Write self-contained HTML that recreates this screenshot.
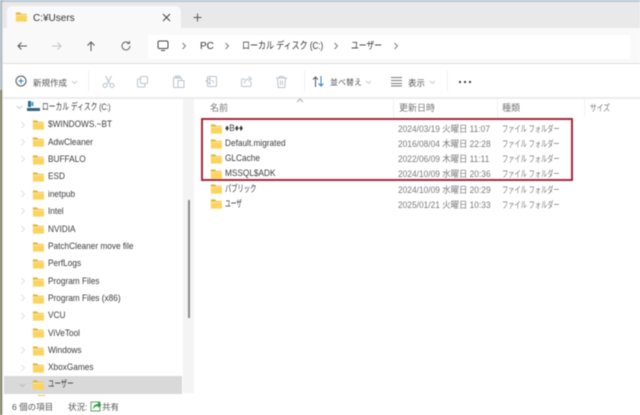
<!DOCTYPE html>
<html lang="ja"><head><meta charset="utf-8"><title>C:¥Users</title>
<style>
html,body{margin:0;padding:0;background:#fff}
#w{position:relative;width:640px;height:415px;overflow:hidden;background:#fff;font-family:"Liberation Sans","Noto Sans CJK JP",sans-serif;color:#333;filter:blur(.4px)}
#w div,#w svg{position:absolute}
.t{white-space:nowrap;line-height:14px;height:14px;transform-origin:left center}
.tr{font-size:9.5px;left:48px;color:#3c3c3c;transform:scaleX(.87)}
.r{font-size:9.5px;left:225px;color:#3c3c3c;transform:scaleX(.87)}
.d{font-size:9px;left:398px;color:#7a7a7a;transform:scaleX(.93)}
.k{font-size:9px;left:502px;color:#7a7a7a;transform:scaleX(.69)}
.h{font-size:9px;color:#777;top:101px}
.f{width:12.500px;height:10px}
.c{width:6px;height:8px}
.a{width:6px;height:8px}
.i{fill:none;stroke:#b9c3cb;stroke-width:1}
</style></head><body>
<div id="w">
<svg width="0" height="0" style="left:0;top:0"><defs>
<symbol id="fo" viewBox="0 0 16 13"><path d="M1 .5h5.500l1.500 2H15v2H1z" fill="#e3b63c"/><path d="M1 3.500h14.500V12.500H1z" fill="#fbd45f"/><path d="M1 3.500h14.500v1.200H1z" fill="#fdeaa8"/></symbol>
<symbol id="ch" viewBox="0 0 6 8"><path d="M1.500 1l3 3-3 3" fill="none" stroke="#e2e2e2"/></symbol>
<symbol id="ca" viewBox="0 0 6 8"><path d="M1.500 1l3 3-3 3" fill="none" stroke="#7d7d7d"/></symbol>
</defs></svg>

<!-- chrome -->
<div style="left:0;top:0;width:640px;height:28px;background:#e9e9e9"></div>
<div style="left:0;top:0;width:640px;height:2px;background:#b7c6d3"></div>
<div style="left:7px;top:6px;width:174px;height:22px;background:#f9f9f9;border-radius:5px 5px 0 0"></div>
<svg class="f" style="left:14.500px;top:12px"><use href="#fo"/></svg>
<div class="t" style="left:33px;top:11.500px;font-size:10px;color:#333">C:¥Users</div>
<svg style="left:161px;top:12px" width="11" height="11"><path d="M2 2l7 7M9 2l-7 7" stroke="#444" fill="none"/></svg>
<svg style="left:192px;top:12px" width="11" height="11"><path d="M5.500 1.500v8M1.500 5.500h8" stroke="#555" fill="none"/></svg>

<div style="left:0;top:28px;width:640px;height:35px;background:#f9f9f9"></div>
<div style="left:148px;top:35px;width:482px;height:24px;background:#fff"></div>
<svg style="left:16px;top:40px" width="12" height="12"><path d="M11 6H2M5.500 2.500L2 6l3.500 3.500" stroke="#555" fill="none"/></svg>
<svg style="left:51px;top:40px" width="12" height="12"><path d="M1 6h9M6.500 2.500L10 6l-3.500 3.500" stroke="#c4c4c4" fill="none"/></svg>
<svg style="left:85px;top:40px" width="12" height="12"><path d="M6 11V2M2.500 5.500L6 2l3.500 3.500" stroke="#555" fill="none"/></svg>
<svg style="left:120px;top:40px" width="12" height="12"><path d="M10 6a4 4 0 1 1-1.300-3M9.500 1v2.500H7" stroke="#666" fill="none"/></svg>
<svg style="left:157px;top:40px" width="12" height="12"><rect x="1" y="1" width="10" height="7.500" rx="1.500" fill="none" stroke="#444"/><path d="M4 10.500h4" stroke="#444"/></svg>
<svg class="a" style="left:181px;top:42px"><use href="#ca"/></svg>
<svg class="a" style="left:224px;top:42px"><use href="#ca"/></svg>
<svg class="a" style="left:333px;top:42px"><use href="#ca"/></svg>
<svg class="a" style="left:393px;top:42px"><use href="#ca"/></svg>
<div class="t" style="left:200px;top:40px;font-size:10px">PC</div>
<div class="t" style="left:242px;top:40px;font-size:10px;transform:scaleX(.8)">ローカル ディスク (C:)</div>
<div class="t" style="left:351px;top:40px;font-size:10px;transform:scaleX(.78)">ユーザー</div>
<div style="left:0;top:63px;width:640px;height:1px;background:#dedede"></div>

<!-- toolbar -->
<svg style="left:15px;top:75px" width="12" height="12"><circle cx="6" cy="6" r="5" fill="none" stroke="#555"/><path d="M6 3.500v5M3.500 6h5" stroke="#2c7fb8" fill="none"/></svg>
<div class="t" style="left:33px;top:75.500px;font-size:8.500px;color:#555">新規作成</div>
<svg style="left:71px;top:80px" width="7" height="5"><path d="M1 1l2.500 2.500L6 1" fill="none" stroke="#ccc"/></svg>
<div style="left:88px;top:71px;width:1px;height:20px;background:#f0f0f0"></div>
<svg class="i" style="left:102px;top:75px" width="13" height="13"><circle cx="3" cy="10.500" r="2"/><circle cx="10" cy="10.500" r="2"/><path d="M3.500 1l4.500 8M9.500 1L5 9"/></svg>
<svg class="i" style="left:136px;top:75px" width="13" height="13"><rect x="4.500" y="1.500" width="7" height="7" rx="1"/><path d="M4 4H2.500a1 1 0 0 0-1 1v6a1 1 0 0 0 1 1H8a1 1 0 0 0 1-1V9"/></svg>
<svg class="i" style="left:172px;top:75px" width="13" height="13"><rect x="1.500" y="2.500" width="8" height="10" rx="1"/><rect x="6" y="5.500" width="6" height="7" fill="#fff"/><path d="M3.500 1h4v2h-4z"/></svg>
<svg class="i" style="left:205px;top:75px" width="13" height="13"><rect x="2.500" y="1.500" width="9" height="10" rx="1"/><path d="M1 6l4-3v6zM7 5l2 3"/></svg>
<svg class="i" style="left:240px;top:75px" width="13" height="13"><path d="M11 6.500v4a1 1 0 0 1-1 1H2.500a1 1 0 0 1-1-1V5a1 1 0 0 1 1-1H5"/><path d="M4.500 8.500c0-3 2-4.500 5-4.500M8.500 1.500L11.500 4l-3 2.500"/></svg>
<svg class="i" style="left:275px;top:75px" width="13" height="13"><path d="M1 3h11M4.500 3V1.500h4V3M2.500 3l.700 9.500h6.600l.700-9.500M5.500 5.500v4.500M7.500 5.500v4.500"/></svg>
<div style="left:304px;top:71px;width:1px;height:20px;background:#f0f0f0"></div>
<svg style="left:312px;top:75px" width="13" height="13"><path d="M3.500 12V2M1 4.500L3.500 2 6 4.500" fill="none" stroke="#555"/><path d="M9 1v10M6.500 8.500L9 11l2.500-2.500" fill="none" stroke="#2c7fb8"/></svg>
<div class="t" style="left:330px;top:75.500px;font-size:8px;color:#555">並べ替え</div>
<svg style="left:365px;top:80px" width="7" height="5"><path d="M1 1l2.500 2.500L6 1" fill="none" stroke="#ccc"/></svg>
<svg style="left:391px;top:76px" width="12" height="11"><path d="M0 1.500h11M0 4.500h11M0 7.500h11M0 10h11" fill="none" stroke="#777"/></svg>
<div class="t" style="left:408px;top:75.500px;font-size:8.500px;color:#555">表示</div>
<svg style="left:429px;top:80px" width="7" height="5"><path d="M1 1l2.500 2.500L6 1" fill="none" stroke="#ccc"/></svg>
<div style="left:447px;top:71px;width:1px;height:20px;background:#f0f0f0"></div>
<svg style="left:458px;top:80px" width="14" height="4"><circle cx="2" cy="2" r="1.100" fill="#333"/><circle cx="7" cy="2" r="1.100" fill="#333"/><circle cx="12" cy="2" r="1.100" fill="#333"/></svg>
<div style="left:0;top:97px;width:640px;height:2px;background:#ececec"></div>

<!-- left edge -->
<div style="left:0;top:0;width:3px;height:415px;background:#a9b7c0"></div>
<div style="left:0;top:90px;width:2px;height:325px;background:#7c7a5c"></div>
<div style="left:2px;top:2px;width:1px;height:413px;background:#e2e2e2"></div>

<!-- nav -->
<div style="left:183px;top:99px;width:11px;height:294px;background:#f4f4f4"></div>
<div style="left:188px;top:200px;width:1.500px;height:118px;background:#8a8a8a"></div>
<div style="left:4px;top:376px;width:178px;height:17.500px;background:#d9d9d9"></div>

<svg style="left:16px;top:105px" width="7" height="5"><path d="M1 1l2.500 2.500L6 1" fill="none" stroke="#ccc"/></svg>
<svg style="left:27px;top:101px" width="13" height="11"><rect x="1" y="0" width="3" height="6" fill="#1f6f9c"/><rect x="4.500" y="1" width="2" height="4" fill="#4a9bc4"/><rect x="0" y="7" width="13" height="3" fill="#33627d"/></svg>
<div class="t" style="left:42px;top:100.500px;font-size:9.500px;color:#3c3c3c;transform:scaleX(.71)">ローカル ディスク (C:)</div>

<svg class="c" style="left:20px;top:121px"><use href="#ch"/></svg><svg class="f" style="left:32px;top:120px"><use href="#fo"/></svg><div class="t tr" style="top:118px">$WINDOWS.~BT</div>
<svg class="c" style="left:20px;top:138px"><use href="#ch"/></svg><svg class="f" style="left:32px;top:137px"><use href="#fo"/></svg><div class="t tr" style="top:135.500px">AdwCleaner</div>
<svg class="c" style="left:20px;top:155px"><use href="#ch"/></svg><svg class="f" style="left:32px;top:155px"><use href="#fo"/></svg><div class="t tr" style="top:153px">BUFFALO</div>
<svg class="f" style="left:32px;top:172px"><use href="#fo"/></svg><div class="t tr" style="top:170.300px">ESD</div>
<svg class="c" style="left:20px;top:190px"><use href="#ch"/></svg><svg class="f" style="left:32px;top:190px"><use href="#fo"/></svg><div class="t tr" style="top:188px">inetpub</div>
<svg class="c" style="left:20px;top:207px"><use href="#ch"/></svg><svg class="f" style="left:32px;top:207px"><use href="#fo"/></svg><div class="t tr" style="top:205.300px">Intel</div>
<svg class="c" style="left:20px;top:225px"><use href="#ch"/></svg><svg class="f" style="left:32px;top:224px"><use href="#fo"/></svg><div class="t tr" style="top:222.500px">NVIDIA</div>
<svg class="f" style="left:32px;top:242px"><use href="#fo"/></svg><div class="t tr" style="top:240px">PatchCleaner move file</div>
<svg class="f" style="left:32px;top:259px"><use href="#fo"/></svg><div class="t tr" style="top:257.300px">PerfLogs</div>
<svg class="c" style="left:20px;top:277px"><use href="#ch"/></svg><svg class="f" style="left:32px;top:277px"><use href="#fo"/></svg><div class="t tr" style="top:274.500px">Program Files</div>
<svg class="c" style="left:20px;top:294px"><use href="#ch"/></svg><svg class="f" style="left:32px;top:294px"><use href="#fo"/></svg><div class="t tr" style="top:292px">Program Files (x86)</div>
<svg class="c" style="left:20px;top:312px"><use href="#ch"/></svg><svg class="f" style="left:32px;top:311px"><use href="#fo"/></svg><div class="t tr" style="top:309.300px">VCU</div>
<svg class="f" style="left:32px;top:328px"><use href="#fo"/></svg><div class="t tr" style="top:326.500px">ViVeTool</div>
<svg class="c" style="left:20px;top:346px"><use href="#ch"/></svg><svg class="f" style="left:32px;top:346px"><use href="#fo"/></svg><div class="t tr" style="top:344px">Windows</div>
<svg class="c" style="left:20px;top:364px"><use href="#ch"/></svg><svg class="f" style="left:32px;top:363px"><use href="#fo"/></svg><div class="t tr" style="top:361.300px">XboxGames</div>
<svg style="left:19px;top:383px" width="7" height="5"><path d="M1 1l2.500 2.500L6 1" fill="none" stroke="#bbb"/></svg><svg class="f" style="left:32px;top:380px"><use href="#fo"/></svg><div class="t tr" style="top:378px;transform:scaleX(.68)">ユーザー</div>

<!-- status -->
<div style="left:4px;top:393.500px;width:190px;height:21.500px;background:#fff"></div>
<div style="left:38px;top:394.500px;width:7px;height:1.500px;background:#f0c95a"></div>
<div class="t" style="left:12px;top:400px;font-size:8.500px;color:#555">6 個の項目</div>
<div class="t" style="left:68px;top:400px;font-size:8.500px;color:#555">状況:</div>
<svg style="left:90px;top:400px" width="12" height="12"><rect x="1" y="2" width="9" height="9" fill="#fff" stroke="#5aa55a"/><path d="M3 9c0-3 2-5 5-5V1.500L11.500 5 8 8V6C6 6 4.500 7 3 9z" fill="#2e9a4a"/></svg>
<div class="t" style="left:102px;top:400px;font-size:8.500px;color:#555">共有</div>

<!-- headers -->
<svg style="left:296px;top:98px" width="8" height="5"><path d="M1 4l3-3 3 3" fill="none" stroke="#aaa"/></svg>
<div class="t h" style="left:210px">名前</div>
<div style="left:393px;top:99px;width:1px;height:18px;background:#f0f0f0"></div>
<div class="t h" style="left:399px">更新日時</div>
<div style="left:497px;top:99px;width:1px;height:18px;background:#f0f0f0"></div>
<div class="t h" style="left:502px">種類</div>
<div style="left:584px;top:99px;width:1px;height:18px;background:#f0f0f0"></div>
<div class="t h" style="left:590px;transform:scaleX(.75)">サイズ</div>

<!-- rows -->
<svg class="f" style="left:209.500px;top:123.500px"><use href="#fo"/></svg><div class="t r" style="top:122px">♦B♦♦</div><div class="t d" style="top:122px">2024/03/19 火曜日 11:07</div><div class="t k" style="top:122px">ファイル フォルダー</div>
<svg class="f" style="left:209.500px;top:138.500px"><use href="#fo"/></svg><div class="t r" style="top:137px">Default.migrated</div><div class="t d" style="top:137px">2016/08/04 木曜日 22:28</div><div class="t k" style="top:137px">ファイル フォルダー</div>
<svg class="f" style="left:209.500px;top:153.500px"><use href="#fo"/></svg><div class="t r" style="top:152px">GLCache</div><div class="t d" style="top:152px">2022/06/09 木曜日 11:11</div><div class="t k" style="top:152px">ファイル フォルダー</div>
<svg class="f" style="left:209.500px;top:168.500px"><use href="#fo"/></svg><div class="t r" style="top:167px">MSSQL$ADK</div><div class="t d" style="top:167px">2024/10/09 水曜日 20:36</div><div class="t k" style="top:167px">ファイル フォルダー</div>
<svg class="f" style="left:209.500px;top:184px"><use href="#fo"/></svg><div class="t r" style="top:182.500px;transform:scaleX(.66)">パブリック</div><div class="t d" style="top:182.500px">2024/10/09 水曜日 20:29</div><div class="t k" style="top:182.500px">ファイル フォルダー</div>
<svg class="f" style="left:209.500px;top:199px"><use href="#fo"/></svg><div class="t r" style="top:197.500px;transform:scaleX(.6)">ユーザ</div><div class="t d" style="top:197.500px">2025/01/21 火曜日 10:33</div><div class="t k" style="top:197.500px">ファイル フォルダー</div>

<!-- red highlight -->
<div style="left:201px;top:118px;width:368px;height:59px;border:2px solid #a62a3e"></div>
</div>
</body></html>
